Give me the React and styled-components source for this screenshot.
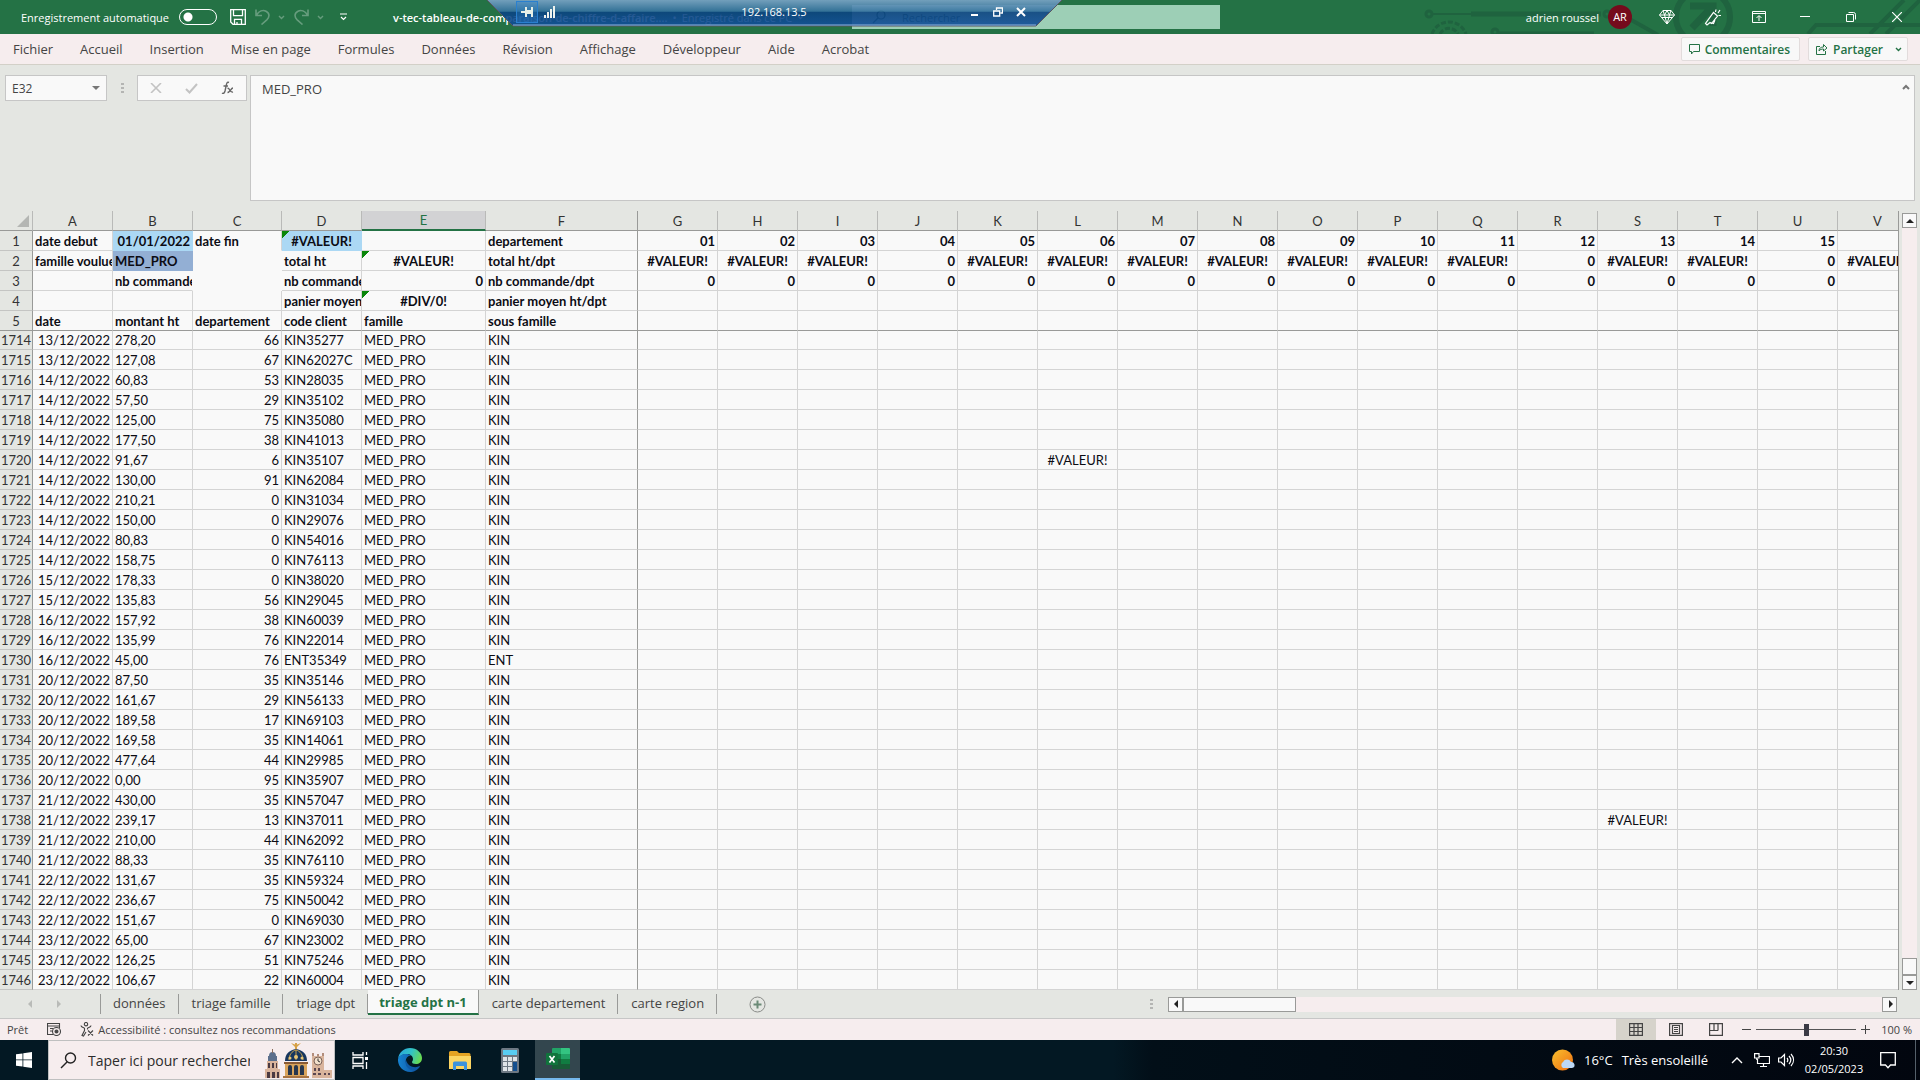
import React from "react";
import styled, { createGlobalStyle, css } from "styled-components";

const GlobalStyle = createGlobalStyle`
  * {
    box-sizing: border-box;
  }
  body {
    margin: 0;
    background: #e4e6e2;
    font-family: "Open Sans", "Noto Sans", sans-serif;
    font-size: 12px;
    color: #444;
  }
  button, input, textarea {
    font: inherit;
    color: inherit;
  }
  button {
    display: flex;
    align-items: center;
    justify-content: center;
    padding: 0;
    border: 0;
    background: none;
  }
  svg {
    display: block;
    flex: none;
  }
`;

const Page = styled.div`
  display: flex;
  flex-direction: column;
  min-height: 100vh;
`;

/* ---------- title bar ---------- */

const TitleBar = styled.header`
  position: relative;
  display: flex;
  align-items: center;
  height: 34px;
  padding-left: 21px;
  background: #247245;
  color: #fff;
  font-size: 11px;
`;

const Circuit = styled.svg`
  position: absolute;
  top: 0;
  right: 0;
`;

const AutoSave = styled.label`
  display: flex;
  align-items: center;
  justify-content: space-between;
  width: 196px;
  white-space: nowrap;
`;

const Toggle = styled.input`
  appearance: none;
  flex: none;
  width: 38px;
  height: 16px;
  margin: 0;
  border: 1px solid #fff;
  border-radius: 8px;
  background: radial-gradient(circle at 8px 7px, #fff 4px, transparent 5px);
`;

const QuickAccess = styled.div`
  display: flex;
  align-items: center;
  gap: 9px;
  margin-left: 13px;
`;

const QuickButton = styled.button`
  opacity: ${(props) => (props.$faded ? 0.3 : 1)};
  gap: 8px;
`;

const DocTitle = styled.div`
  display: flex;
  align-items: center;
  gap: 5px;
  width: 425px;
  margin-left: 40px;
  white-space: nowrap;

  b {
    font-weight: 600;
  }
`;

const SearchBox = styled.label`
  display: flex;
  align-items: center;
  gap: 16px;
  width: 368px;
  height: 24px;
  margin-left: 34px;
  padding-left: 20px;
  background: #9dcfb6;
  color: #14512f;

  input {
    flex: 1;
    min-width: 0;
    padding: 0;
    border: 0;
    outline: 0;
    background: none;
  }
  input::placeholder {
    color: #14512f;
  }
`;

const Account = styled.div`
  position: relative;
  display: flex;
  align-items: center;
  gap: 9px;
  margin-left: auto;
  white-space: nowrap;
`;

const Avatar = styled.span`
  width: 24px;
  height: 24px;
  border-radius: 50%;
  background: #750b1c;
  line-height: 24px;
  text-align: center;
`;

const WindowButtons = styled.div`
  position: relative;
  display: flex;
  margin-left: 12px;

  button {
    width: 46px;
    height: 34px;
  }
`;

const RemoteBar = styled.div`
  position: absolute;
  top: 0;
  left: 487px;
  width: 575px;
  height: 27px;
  display: flex;
  align-items: center;
  padding: 0 36px 4px 29px;
`;

const RemoteShape = styled.svg`
  position: absolute;
  top: 0;
  left: 0;
`;

const Signal = styled.svg`
  position: relative;
`;

const Pin = styled.button`
  position: relative;
  width: 22px;
  height: 22px;
  margin-right: 6px;
  border: 1px solid #2a80cf;
  background: rgba(42, 128, 207, 0.3);
`;

const RemoteAddress = styled.span`
  position: relative;
  flex: 1;
  padding-left: 22px;
  text-align: center;
`;

const RemoteButtons = styled.div`
  position: relative;
  display: flex;
  gap: 13px;
`;

/* ---------- ribbon ---------- */

const Ribbon = styled.nav`
  display: flex;
  align-items: center;
  height: 31px;
  padding: 0 12px 0 13px;
  border-bottom: 1px solid #d3d0c8;
  background: #f6edee;
`;

const Tabs = styled.div`
  display: flex;
  gap: 27px;
  flex: 1;
`;

const RibbonTab = styled.button`
  font-size: 13px;
  line-height: 20px;
  white-space: nowrap;
`;

const ShareButton = styled.button`
  gap: 5px;
  height: 24px;
  margin-left: 8px;
  padding: 0 9px 0 7px;
  border: 1px solid #e2dcdc;
  border-radius: 2px;
  background: #f8f8f8;
  color: #247245;
  font-weight: 600;

  svg:nth-of-type(2) {
    margin-left: 7px;
    margin-right: -4px;
  }
`;

/* ---------- formula bar ---------- */

const FormulaBar = styled.div`
  display: flex;
  align-items: flex-start;
  padding: 10px 5px;
`;

const NameBox = styled.div`
  display: flex;
  align-items: center;
  width: 102px;
  height: 26px;
  padding: 0 6px;
  border: 1px solid #c6c6c6;
  background: #f9f9f9;

  input {
    flex: 1;
    min-width: 0;
    padding: 0;
    border: 0;
    background: none;
  }
`;

const Grip = styled.span`
  width: 3px;
  height: 11px;
  background: repeating-linear-gradient(#b4b5b3 0 2px, transparent 2px 4px);
`;

const GripSlot = styled.div`
  display: flex;
  align-items: center;
  justify-content: center;
  width: 30px;
  height: 26px;
`;

const FormulaTools = styled.div`
  display: flex;
  align-items: center;
  justify-content: space-around;
  width: 110px;
  height: 26px;
  margin-right: 3px;
  border: 1px solid #c6c6c6;
  background: #f9f9f9;
`;

const FormulaField = styled.div`
  display: flex;
  align-items: flex-start;
  flex: 1;
  height: 126px;
  border: 1px solid #c6c6c6;
  background: #f9f9f9;

  textarea {
    flex: 1;
    height: 100%;
    padding: 4px 11px;
    border: 0;
    outline: 0;
    resize: none;
    background: none;
    font-size: 13px;
    line-height: 18px;
  }
  button {
    width: 16px;
    height: 22px;
  }
`;

/* ---------- sheet ---------- */

const SheetArea = styled.main`
  display: flex;
`;

const SheetView = styled.div`
  flex: 1;
  min-width: 0;
  overflow: hidden;
  border-right: 1px solid #999a98;
`;

const Sheet = styled.table`
  width: 1918px;
  table-layout: fixed;
  border-collapse: separate;
  border-spacing: 0;
  font-family: Lato, "Open Sans", sans-serif;
  font-size: 13px;
  line-height: 18px;
  color: #0c0c14;
`;

const ColHead = styled.th`
  height: 20px;
  padding: 0;
  border-right: 1px solid #b9bab8;
  border-bottom: 1px solid #999a98;
  background: #e4e6e2;
  color: #333;
  font-weight: 400;
  line-height: 16px;

  ${(props) =>
    props.$selected &&
    css`
      border-bottom: 2px solid #247245;
      background: #d2d2d4;
      color: #247245;
    `}
  ${(props) => props.$freeze && "border-right-color: #999a98;"}

  svg {
    margin-left: 17px;
  }
`;

const RowHead = styled.th`
  height: ${(props) => (props.$first ? 19 : 20)}px;
  padding: 0;
  border-right: 1px solid #999a98;
  border-bottom: 1px solid ${(props) => (props.$last ? "#999a98" : "#c4c5c3")};
  background: #e4e6e2;
  color: #333;
  font-weight: 400;
  text-align: center;
`;

const Cell = styled.td`
  padding: 0 2px;
  overflow: hidden;
  white-space: nowrap;
  border-right: 1px solid ${(props) => (props.$freeze ? "#999a98" : "#d4d4d4")};
  border-bottom: 1px solid ${(props) => (props.$last ? "#999a98" : "#d4d4d4")};
  background: ${(props) => props.$fill || "#f9f9f9"};
  font-weight: ${(props) => (props.$bold ? 700 : 400)};
  text-align: ${(props) => props.$align || "left"};

  ${(props) => props.$noBottom && "border-bottom-color: #f9f9f9;"}
  ${(props) => props.$noRight && "border-right-color: #f9f9f9;"}
  ${(props) => props.$fill && `border-color: ${props.$fill};`}
  ${(props) =>
    props.$error &&
    css`
      background-image: linear-gradient(135deg, #0a860a 5px, transparent 5px);
      background-repeat: no-repeat;
    `}
`;

const VScroll = styled.div`
  display: flex;
  flex-direction: column;
  width: 15px;
  margin: 2px 3px 0;
  background: #f6edee;
`;

const ScrollButton = styled.button`
  width: 15px;
  height: 15px;
  border: 1px solid #999a98;
  background: #f9f9f9;
`;

const VThumb = styled.div`
  height: 17px;
  margin-top: auto;
  border: 1px solid #999a98;
  background: #f9f9f9;
`;

/* ---------- sheet tabs ---------- */

const SheetTabs = styled.div`
  display: flex;
  align-items: center;
  height: 29px;
  padding-right: 23px;
  border-bottom: 1px solid #c6c6c6;
  background: #e4e6e2;
`;

const TabArrows = styled.div`
  display: flex;
  gap: 22px;
  width: 100px;
  padding-left: 27px;
`;

const SheetTab = styled.button`
  height: 20px;
  padding: 0 12px 2px;
  border-left: 1px solid ${(props) => (props.$first ? "#999a98" : "transparent")};
  border-right: 1px solid #999a98;
  font-size: 13px;
  white-space: nowrap;

  ${(props) =>
    props.$active &&
    css`
      align-self: flex-start;
      height: 25px;
      padding: 0 11px;
      border-left: 0;
      border-bottom: 2px solid #247245;
      background: #f9f9f9;
      color: #247245;
      font-weight: 700;
    `}
`;

const AddSheet = styled.button`
  margin-left: 32px;
`;

const TabGrip = styled.div`
  display: flex;
  margin-left: auto;
  padding-right: 15px;
`;

const HScroll = styled.div`
  display: flex;
  width: 729px;
  background: #f6edee;
`;

const HThumb = styled.div`
  width: 113px;
  height: 15px;
  margin-right: auto;
  border: 1px solid #999a98;
  background: #f9f9f9;
`;

/* ---------- status bar ---------- */

const StatusBar = styled.footer`
  display: flex;
  align-items: center;
  height: 21px;
  padding: 0 8px 0 7px;
  background: #f6edee;
  font-size: 11px;
  white-space: nowrap;
`;

const StatusItem = styled.span`
  display: flex;
  align-items: center;
  gap: 4px;
  margin-right: 19px;
`;

const Views = styled.div`
  display: flex;
  margin-left: auto;
`;

const ViewButton = styled.button`
  width: 40px;
  height: 21px;
  background: ${(props) => (props.$active ? "#d6d3cb" : "none")};
`;

const Zoom = styled.div`
  display: flex;
  align-items: center;
  gap: 5px;
  margin-left: 6px;
`;

const ZoomSlider = styled.input`
  appearance: none;
  width: 100px;
  height: 12px;
  margin: 0;
  background: linear-gradient(#555, #555) center / 100% 1px no-repeat;

  &::-webkit-slider-thumb {
    appearance: none;
    width: 5px;
    height: 12px;
    background: #3a3a44;
  }
`;

const ZoomValue = styled.span`
  width: 37px;
  text-align: right;
`;

/* ---------- taskbar ---------- */

const Taskbar = styled.div`
  display: flex;
  height: 40px;
  background: linear-gradient(90deg, #031823 0%, #031823 58%, #020f18 60%, #02060f 100%);
  color: #fff;
`;

const TaskButton = styled.button`
  width: ${(props) => props.$width || 50}px;
  height: 40px;

  ${(props) =>
    props.$active &&
    css`
      width: 45px;
      border-bottom: 2px solid #76b9ed;
      background: #33464e;
    `}
`;

const TaskSearch = styled.label`
  display: flex;
  align-items: center;
  width: 287px;
  border: 1px solid #bfc0c0;
  padding-left: 11px;
  background: #f6edee;
  color: #222;

  input {
    flex: 1;
    min-width: 0;
    margin-left: 11px;
    padding: 0;
    border: 0;
    background: none;
    font-size: 14px;
  }
  input::placeholder {
    color: #2b2b2b;
  }
`;

const Tray = styled.div`
  display: flex;
  align-items: center;
  margin-left: auto;
  padding-right: 4px;
  white-space: nowrap;
`;

const Weather = styled.button`
  gap: 9px;
  margin-right: 16px;
  font-size: 13px;
`;

const Clock = styled.time`
  width: 72px;
  margin-right: 10px;
  font-size: 11px;
  line-height: 18px;
  text-align: center;
`;

const TrayEdge = styled.span`
  width: 1px;
  height: 40px;
  margin-left: 19px;
  background: #55606a;
`;

/* ---------- icons ---------- */

const Line = ({ w = 16, h = 16, children, sw = 1, ...rest }) => (
  <svg width={w} height={h} viewBox={`0 0 ${w} ${h}`} fill="none" stroke="currentColor" strokeWidth={sw} aria-hidden="true" {...rest}>
    {children}
  </svg>
);

const Chevron = () => (
  <Line w={7} h={5} sw={1.4}><path d="M1 1l2.5 2.5L6 1" /></Line>
);

const Triangle = ({ dir, color = "#222" }) => {
  const d = {
    up: "M0 5h8L4 1z",
    down: "M0 1h8L4 5z",
    left: "M5 0v8L1 4z",
    right: "M2 0v8l4-4z",
  }[dir];
  const tall = dir === "left" || dir === "right";
  return (
    <svg width={tall ? 6 : 8} height={tall ? 8 : 6} fill={color} aria-hidden="true">
      <path d={d} />
    </svg>
  );
};

const CircuitArt = () => (
  <Circuit width="520" height="34" viewBox="0 0 520 34" fill="none" stroke="#1f633f" strokeWidth="3" aria-hidden="true">
    <circle cx="29" cy="14" r="3" />
    <path d="M33 14h38" strokeWidth="2" />
    <path d="M71 14h130" strokeWidth="5" />
    <circle cx="207" cy="14" r="3" />
    <path d="M32 34a18 18 0 0 1 34 0M40 34a10 10 0 0 1 18 0" strokeDasharray="5 2" />
    <circle cx="95" cy="32" r="3" />
    <path d="M99 33h95" />
    <path d="M226 17l32 18" strokeWidth="4" />
    <circle cx="303" cy="17" r="27" strokeWidth="6" />
    <path d="M290 6h23v20M311 8l-19 20" strokeWidth="7" />
    <path d="M408 34l8-9h104M470 34l34-34M486 34l34-34" strokeWidth="4" />
  </Circuit>
);

const SaveIcon = () => (
  <Line w={16} h={16} sw={1.3}>
    <path d="M.7.7h14.6v14.6H3L.7 13zM3.5.7v6h9v-6M4.5 15.3v-5h7v5M7 15v-2" />
  </Line>
);

const UndoIcon = ({ flip }) => (
  <Line w={15} h={16} sw={1.6} transform={flip ? "scale(-1 1)" : undefined}>
    <path d="M1 .5v6h6M1.3 6.2C4 2 8 .8 11 2.2c4 2 3.6 6 .8 8.6L6.5 15.5" />
  </Line>
);

const DiamondIcon = () => (
  <Line>
    <path d="M4 1.5h8l3.5 4.5L8 15 .5 6zM.5 6h15M4 1.5L5.5 6 8 15l2.5-9L12 1.5M8 1.5L5.5 6M8 1.5L10.5 6M2.5 8.5h11" />
  </Line>
);

const PenIcon = () => (
  <Line w={18} h={17} sw={1.2}>
    <path d="M9.500 3.500l4 3.500-6 7.500-1.500-1-3 2.500-1.500-1.500zM6 13.500l3.500 1 1.500-3.500M11.500 3l.5-2.500M14 4l2-3M14.500 6.500h2.500" />
  </Line>
);

const DomeArt = () => (
  <svg width="70" height="36" viewBox="0 0 70 36" aria-hidden="true">
    <g fill="#d9b49c">
      <path d="M1 36V27h15v9zM3 27v-8h11v8z" />
      <path d="M48 36V14h12v22zM60 36v-8h8v8z" />
    </g>
    <path d="M4 19v-5h9v5zM5 14a3.5 4 0 0 1 7 0z" fill="#5b6f8c" />
    <path d="M8.5 7v4" stroke="#8b6d5c" />
    <path d="M4 21h2v5H4zM8 21h2v5H8zM12 21h1v5h-1zM3 30h3v6H3zM8 30h3v6H8zM13 30h2v6h-2z" fill="#4a3a42" />
    <path d="M21 36V20h22v16z" fill="#d9a45c" />
    <path d="M21 19C21 11 26 8 32 7c6 1 11 4 11 12z" fill="#17375f" />
    <path d="M25 18c0-5 3-9 7-10M39 18c0-5-3-9-7-10M32 8v10" stroke="#c8a04b" fill="none" />
    <circle cx="32" cy="15" r="2" fill="#e9c674" />
    <circle cx="26" cy="16" r="1.5" fill="#e9c674" />
    <circle cx="38" cy="16" r="1.5" fill="#e9c674" />
    <path d="M20 20h24v2H20z" fill="#8a5b35" />
    <path d="M31 7V1h2v6zM27 1l5 2 5-2-4 4h-2z" fill="#d6a045" />
    <path d="M24 25a2 2 0 0 1 4 0v8h-4zM30 25a2 2 0 0 1 4 0v8h-4zM36 25a2 2 0 0 1 4 0v8h-4z" fill="#27364d" />
    <path d="M19 34h26v2H19z" fill="#a87442" />
    <path d="M48 14v-3h2v3zM53 14v-2h2v2zM58 14v-3h2v3z" fill="#b28d7c" />
    <circle cx="54" cy="19" r="4" fill="#f1dfcb" stroke="#7b6258" />
    <path d="M54 16.5V19l2 1" stroke="#333" fill="none" />
    <path d="M50 26h2v3h-2zM54 26h2v3h-2zM49 31h3v2h-3zM54 31h3v2h-3zM60 31h2v2h-2zM64 31h2v2h-2z" fill="#5a4650" />
  </svg>
);

const EdgeIcon = () => (
  <svg width="24" height="24" viewBox="0 0 24 24" aria-hidden="true">
    <defs>
      <linearGradient id="edgeTop" x1="0" x2="1" y1=".3" y2=".6">
        <stop offset="0" stopColor="#2aa6dd" />
        <stop offset=".5" stopColor="#32c3c6" />
        <stop offset="1" stopColor="#6bdc4c" />
      </linearGradient>
      <linearGradient id="edgeLow" x1="0" x2="1">
        <stop offset="0" stopColor="#1683d2" />
        <stop offset="1" stopColor="#0d4c98" />
      </linearGradient>
    </defs>
    <path d="M0 11C1 4 6 0 12 0c7 0 12 5 12 10 0 4-3 6-6 6-3 0-4-1-4-2s1-1 1-3c0-3-3-5-6-5-4 0-8 2-9 5z" fill="url(#edgeTop)" />
    <path d="M0 11c1-3 4-5 8-5 2 0 4 .6 5 1.5C9 8 7 11 8 15c1 4 5 6 9 5 2 0 4-1 5-2-2 4-6 6-10 6C5 24-.5 18 0 11z" fill="url(#edgeLow)" />
    <path d="M8 12c-1.500 4 1 9 6 10 4 .5 7-2 8-4-5 2.500-12 1-14-6z" fill="#0e5aa7" />
  </svg>
);

const ExplorerIcon = () => (
  <svg width="22" height="19" viewBox="0 0 22 19" aria-hidden="true">
    <path d="M0 1.5Q0 0 1.5 0H8l2 2h10q1.5 0 1.5 1.5V18H0z" fill="#e5a323" />
    <path d="M0 5h22v13H0z" fill="#fcd563" />
    <path d="M4 19v-7q0-1.5 1.5-1.5h11Q18 10.5 18 12v7h-3v-4H7v4z" fill="#3c92dc" />
  </svg>
);

const CalcIcon = () => (
  <svg width="18" height="25" viewBox="0 0 18 25" aria-hidden="true">
    <rect width="18" height="25" rx="1.5" fill="#6d7883" />
    <path d="M2 2h14v5H2z" fill="#58cdf3" />
    <path d="M2 9h4v4H2zM7 9h4v4H7zM12 9h4v4h-4zM2 14h4v4H2zM7 14h4v4H7zM2 19h4v4H2zM7 19h4v4H7z" fill="#dfe4e8" />
    <path d="M12 14h4v9h-4z" fill="#134f8f" />
  </svg>
);

const ExcelIcon = () => (
  <svg width="24" height="22" viewBox="0 0 24 22" aria-hidden="true">
    <path d="M6 1q0-1 1-1h8v11H6z" fill="#21a366" />
    <path d="M15 0h8q1 0 1 1v5h-9z" fill="#33c481" />
    <path d="M15 6h9v5h-9z" fill="#21a366" />
    <path d="M6 6h9v5H6z" fill="#107c41" />
    <path d="M6 11h18v9q0 1-1 1H7q-1 0-1-1z" fill="#185c37" />
    <path d="M15 11h9v5h-9z" fill="#107c41" />
    <rect y="5" width="12" height="12" rx="1" fill="#10743c" />
    <path d="M3.5 8l5 6.5M8.5 8l-5 6.5" stroke="#fff" strokeWidth="1.7" />
  </svg>
);

const WeatherIcon = () => (
  <svg width="23" height="25" viewBox="0 0 23 25" aria-hidden="true">
    <defs>
      <linearGradient id="sun" x1="0" x2="1" y1="0" y2="1">
        <stop offset="0" stopColor="#f9c02e" />
        <stop offset="1" stopColor="#ee6d12" />
      </linearGradient>
    </defs>
    <circle cx="10.5" cy="12" r="10.5" fill="url(#sun)" />
    <path d="M11 20a3.500 3.500 0 0 1 0-6 4.500 4.500 0 0 1 8 0 3 3 0 0 1 1 6z" fill="#bcd8f6" />
  </svg>
);

/* ---------- data ---------- */

const widths = [80, 80, 89, 80, 124, 152, ...Array(16).fill(80)];
const letters = "ABCDEFGHIJKLMNOPQRSTUV".split("");
const ERR = "#VALEUR!";

const totals = [ERR, ERR, ERR, "0", ERR, ERR, ERR, ERR, ERR, ERR, ERR, "0", ERR, ERR, "0", ERR];

const frozenRows = [
  ["date debut", "01/01/2022", "date fin", ERR, "", "departement",
    ...Array.from({ length: 15 }, (_, i) => String(i + 1).padStart(2, "0")), ""],
  ["famille voulue", "MED_PRO", "", "total ht", ERR, "total ht/dpt", ...totals],
  ["", "nb commande", "", "nb commande", "0", "nb commande/dpt", ...Array(15).fill("0"), ""],
  ["", "", "", "panier moyen", "#DIV/0!", "panier moyen ht/dpt", ...Array(16).fill("")],
  ["date", "montant ht", "departement", "code client", "famille", "sous famille", ...Array(16).fill("")],
];

const orders = [
  ["13/12/2022", "278,20", "66", "KIN35277"],
  ["13/12/2022", "127,08", "67", "KIN62027C"],
  ["14/12/2022", "60,83", "53", "KIN28035"],
  ["14/12/2022", "57,50", "29", "KIN35102"],
  ["14/12/2022", "125,00", "75", "KIN35080"],
  ["14/12/2022", "177,50", "38", "KIN41013"],
  ["14/12/2022", "91,67", "6", "KIN35107"],
  ["14/12/2022", "130,00", "91", "KIN62084"],
  ["14/12/2022", "210,21", "0", "KIN31034"],
  ["14/12/2022", "150,00", "0", "KIN29076"],
  ["14/12/2022", "80,83", "0", "KIN54016"],
  ["14/12/2022", "158,75", "0", "KIN76113"],
  ["15/12/2022", "178,33", "0", "KIN38020"],
  ["15/12/2022", "135,83", "56", "KIN29045"],
  ["16/12/2022", "157,92", "38", "KIN60039"],
  ["16/12/2022", "135,99", "76", "KIN22014"],
  ["16/12/2022", "45,00", "76", "ENT35349"],
  ["20/12/2022", "87,50", "35", "KIN35146"],
  ["20/12/2022", "161,67", "29", "KIN56133"],
  ["20/12/2022", "189,58", "17", "KIN69103"],
  ["20/12/2022", "169,58", "35", "KIN14061"],
  ["20/12/2022", "477,64", "44", "KIN29985"],
  ["20/12/2022", "0,00", "95", "KIN35907"],
  ["21/12/2022", "430,00", "35", "KIN57047"],
  ["21/12/2022", "239,17", "13", "KIN37011"],
  ["21/12/2022", "210,00", "44", "KIN62092"],
  ["21/12/2022", "88,33", "35", "KIN76110"],
  ["22/12/2022", "131,67", "35", "KIN59324"],
  ["22/12/2022", "236,67", "75", "KIN50042"],
  ["22/12/2022", "151,67", "0", "KIN69030"],
  ["23/12/2022", "65,00", "67", "KIN23002"],
  ["23/12/2022", "126,25", "51", "KIN75246"],
  ["23/12/2022", "106,67", "22", "KIN60004"],
];

const strayErrors = { "1720L": ERR, "1738S": ERR };
const fills = { B1: "#abd8f4", D1: "#abd8f4", B2: "#93afd4" };
const flagged = ["D1", "E2", "E4"];

const alignOf = (text) => {
  if (text.startsWith("#")) return "center";
  if (/^\d/.test(text)) return "right";
  return "left";
};

const FrozenRow = ({ cells, number }) => (
  <tr>
    <RowHead scope="row" $last={number === 5}>{number}</RowHead>
    {cells.map((text, i) => {
      const id = letters[i] + number;
      return (
        <Cell
          key={id}
          $bold
          $align={alignOf(text)}
          $fill={fills[id]}
          $error={flagged.includes(id)}
          $freeze={letters[i] === "F"}
          $last={number === 5}
          $noBottom={["C1", "C2", "C3"].includes(id)}
          $noRight={["B3", "C2", "C3"].includes(id)}
        >
          {text}
        </Cell>
      );
    })}
  </tr>
);

const OrderRow = ({ order, number }) => (
  <tr>
    <RowHead scope="row" $first={number === 1714}>{number}</RowHead>
    <Cell $align="right">{order[0]}</Cell>
    <Cell>{order[1]}</Cell>
    <Cell $align="right">{order[2]}</Cell>
    <Cell>{order[3]}</Cell>
    <Cell>MED_PRO</Cell>
    <Cell $freeze>{order[3].slice(0, 3)}</Cell>
    {letters.slice(6).map((letter) => (
      <Cell key={letter} $align="center">{strayErrors[number + letter]}</Cell>
    ))}
  </tr>
);

const ribbonTabs = ["Fichier", "Accueil", "Insertion", "Mise en page", "Formules", "Données", "Révision", "Affichage", "Développeur", "Aide", "Acrobat"];
const sheetTabs = ["données", "triage famille", "triage dpt", "triage dpt n-1", "carte departement", "carte region"];

const App = () => {
  return (
    <Page>
      <GlobalStyle />
      <TitleBar>
        <CircuitArt />
        <AutoSave>
          Enregistrement automatique
          <Toggle type="checkbox" role="switch" />
        </AutoSave>
        <QuickAccess>
          <QuickButton aria-label="Enregistrer"><SaveIcon /></QuickButton>
          <QuickButton $faded aria-label="Annuler"><UndoIcon /><Chevron /></QuickButton>
          <QuickButton $faded aria-label="Rétablir"><UndoIcon flip /><Chevron /></QuickButton>
          <QuickButton aria-label="Personnaliser">
            <Line w={20} h={8} sw={1.2}><path d="M7 1h7M8 4l2.5 2.5L13 4" /></Line>
          </QuickButton>
        </QuickAccess>
        <DocTitle>
          <b>v-tec-tableau-de-comparaison-de-chiffre-d-affaire....</b>
          <span>•</span>
          <span>Enregistré dans ce PC</span>
          <Chevron />
        </DocTitle>
        <SearchBox>
          <Line w={14} h={14} sw={1.2}><path d="M1 13l5-5" /><circle cx="9" cy="5" r="4" /></Line>
          <input type="search" placeholder="Rechercher" aria-label="Rechercher" />
        </SearchBox>
        <Account>
          adrien roussel
          <Avatar>AR</Avatar>
        </Account>
        <WindowButtons>
          <button aria-label="Premium"><DiamondIcon /></button>
          <button aria-label="Nouveautés"><PenIcon /></button>
          <button aria-label="Options du ruban">
            <Line w={14} h={12}><path d="M.5.5h13v11H.5zM.5 2.5h13M7 10V5M4.5 7L7 4.5 9.5 7" /></Line>
          </button>
          <button aria-label="Réduire"><Line w={10} h={10}><path d="M0 4.5h10" /></Line></button>
          <button aria-label="Restaurer">
            <Line w={10} h={10}><path d="M.5 2.5h7v7h-7zM2.5.5h5a2 2 0 0 1 2 2v5" /></Line>
          </button>
          <button aria-label="Fermer"><Line w={10} h={10} sw={1.2}><path d="M0 0l10 10M10 0L0 10" /></Line></button>
        </WindowButtons>
        <RemoteBar>
          <RemoteShape width="575" height="27" viewBox="0 0 575 27" aria-hidden="true">
            <defs>
              <linearGradient id="remote" x1="0" x2="0" y1="0" y2="1">
                <stop offset="0" stopColor="#7ba4c8" />
                <stop offset=".44" stopColor="#34719f" />
                <stop offset=".45" stopColor="#0b4380" />
                <stop offset="1" stopColor="#12509a" />
              </linearGradient>
            </defs>
            <path d="M0 0h575l-26 26H26z" fill="url(#remote)" fillOpacity=".9" />
            <path d="M0 0l26 26h523l26-26" fill="none" stroke="#5b5560" />
            <path d="M26 25h523" stroke="#8eb4dc" />
          </RemoteShape>
          <Pin aria-label="Épingler">
            <svg width="13" height="12" fill="#e8f0e8" aria-hidden="true">
              <path d="M0 5h4v2H0zM4 1h2v10H4zM6 4h5v4H6zM10 1h2v10h-2z" />
            </svg>
          </Pin>
          <Signal width="12" height="12" fill="#eef2ee" aria-hidden="true">
            <path d="M0 9h2v3H0zM3 6h2v6H3zM6 3h2v9H6zM9 0h2v12H9z" />
          </Signal>
          <RemoteAddress>192.168.13.5</RemoteAddress>
          <RemoteButtons>
            <button aria-label="Réduire la session"><Line w={10} h={10} sw={2}><path d="M1 8h7" /></Line></button>
            <button aria-label="Restaurer la session">
              <Line w={10} h={10} sw={1.3}><path d="M3.5 3V1h6v5h-2M.7 4h6v5h-6z" /></Line>
            </button>
            <button aria-label="Fermer la session"><Line w={10} h={10} sw={2}><path d="M1 1l8 8M9 1L1 9" /></Line></button>
          </RemoteButtons>
        </RemoteBar>
      </TitleBar>

      <Ribbon>
        <Tabs>
          {ribbonTabs.map((tab) => (
            <RibbonTab key={tab}>{tab}</RibbonTab>
          ))}
        </Tabs>
        <ShareButton>
          <Line w={11} h={11}><path d="M.5.5h10v7h-6l-2 2.5V7.5h-2z" /></Line>
          Commentaires
        </ShareButton>
        <ShareButton>
          <Line w={12} h={12}><path d="M4 3.5H.5v8h9V8M3 8c0-3 2-4 4.5-4V1.5L11 5 7.5 8V6C5.500 6 4 6.500 3 8z" /></Line>
          Partager
          <Chevron />
        </ShareButton>
      </Ribbon>

      <FormulaBar>
        <NameBox>
          <input aria-label="Zone Nom" defaultValue="E32" />
          <button aria-label="Liste des noms"><Triangle dir="down" color="#777" /></button>
        </NameBox>
        <GripSlot><Grip /></GripSlot>
        <FormulaTools>
          <button aria-label="Annuler la saisie">
            <Line w={12} h={10} sw={1.6} color="#c3c3c3"><path d="M1 0l10 10M11 0L1 10" /></Line>
          </button>
          <button aria-label="Valider">
            <Line w={13} h={11} sw={2} color="#c3c3c3"><path d="M1 6l3.5 3.5L12 1" /></Line>
          </button>
          <button aria-label="Insérer une fonction">
            <Line w={13} h={14} sw={1.4} color="#666"><path d="M8 1.5c-2-1-2.5 1-3 4L4 10c-.5 2-1.5 3-3 2M2.5 5H7M6.5 7.5C8.5 6 8.5 12 12 11M12 7c-2 0-3 4.5-5.5 4.5" /></Line>
          </button>
        </FormulaTools>
        <FormulaField>
          <textarea aria-label="Barre de formule" defaultValue="MED_PRO" />
          <button aria-label="Réduire la barre de formule">
            <Line w={8} h={6} sw={2} color="#777"><path d="M1 5l3-3 3 3" /></Line>
          </button>
        </FormulaField>
      </FormulaBar>

      <SheetArea>
        <SheetView>
          <Sheet>
            <colgroup>
              <col width="33" />
              {widths.map((w, i) => (
                <col key={letters[i]} width={w} />
              ))}
            </colgroup>
            <thead>
              <tr>
                <ColHead aria-label="Tout sélectionner">
                  <svg width="12" height="12" fill="#b4b6b3" aria-hidden="true"><path d="M12 0v12H0z" /></svg>
                </ColHead>
                {letters.map((letter) => (
                  <ColHead key={letter} scope="col" $selected={letter === "E"} $freeze={letter === "F"}>
                    {letter}
                  </ColHead>
                ))}
              </tr>
            </thead>
            <tbody>
              {frozenRows.map((cells, i) => (
                <FrozenRow key={i} cells={cells} number={i + 1} />
              ))}
              {orders.map((order, i) => (
                <OrderRow key={i} order={order} number={1714 + i} />
              ))}
            </tbody>
          </Sheet>
        </SheetView>
        <VScroll>
          <ScrollButton aria-label="Défiler vers le haut"><Triangle dir="up" /></ScrollButton>
          <VThumb />
          <ScrollButton aria-label="Défiler vers le bas"><Triangle dir="down" /></ScrollButton>
        </VScroll>
      </SheetArea>

      <SheetTabs>
        <TabArrows>
          <Triangle dir="left" color="#b9bbb8" />
          <Triangle dir="right" color="#b9bbb8" />
        </TabArrows>
        {sheetTabs.map((tab, i) => (
          <SheetTab key={tab} $first={i === 0} $active={i === 3}>{tab}</SheetTab>
        ))}
        <AddSheet aria-label="Nouvelle feuille">
          <Line w={17} h={17} color="#8a8c89">
            <circle cx="8.5" cy="8.5" r="7.5" />
            <path d="M8.5 4.5v8M4.5 8.5h8" stroke="#6b8a77" strokeWidth="2" />
          </Line>
        </AddSheet>
        <TabGrip><Grip /></TabGrip>
        <HScroll>
          <ScrollButton aria-label="Défiler vers la gauche"><Triangle dir="left" /></ScrollButton>
          <HThumb />
          <ScrollButton aria-label="Défiler vers la droite"><Triangle dir="right" /></ScrollButton>
        </HScroll>
      </SheetTabs>

      <StatusBar>
        <StatusItem>Prêt</StatusItem>
        <StatusItem>
          <Line w={14} h={13} sw={1.1}>
            <path d="M6 11.5H.5V.5h12V5M.5 3h12M3 5.5h3M3 8h2" />
            <circle cx="9.5" cy="8.5" r="4" /><circle cx="9.5" cy="8.5" r="1.5" fill="currentColor" />
          </Line>
        </StatusItem>
        <StatusItem>
          <Line w={14} h={15} sw={1.1}>
            <circle cx="6" cy="2.2" r="1.7" />
            <path d="M1 3.5c0 2 3 2 3.5 3v2L2 13.5l1.5.5L6 10M11 3.5c0 2-3 2-3.5 3v1M8 8.5l5 5M13 8.5l-5 5" />
          </Line>
          Accessibilité : consultez nos recommandations
        </StatusItem>
        <Views>
          <ViewButton $active aria-label="Normal">
            <Line w={14} h={13} sw={1.2}><path d="M.6.6h12.8v11.8H.6zM5 .6v12M9 .6v12M.6 4.5h13M.6 8.5h13" /></Line>
          </ViewButton>
          <ViewButton aria-label="Mise en page">
            <Line w={14} h={13} sw={1.2}><path d="M.6.6h12.8v11.8H.6zM3.5 2.5h7v8h-7zM5 4.5h4M5 6.5h4M5 8.5h4" /></Line>
          </ViewButton>
          <ViewButton aria-label="Aperçu des sauts de page">
            <Line w={14} h={13} sw={1.2}><path d="M.6.6h12.8v11.8H.6zM5 .6v7M9 .6v7M.6 7.5h8.5" /></Line>
          </ViewButton>
        </Views>
        <Zoom>
          <button aria-label="Zoom arrière"><Line w={9} h={9}><path d="M0 4.5h9" /></Line></button>
          <ZoomSlider type="range" min="10" max="190" defaultValue="100" aria-label="Zoom" />
          <button aria-label="Zoom avant"><Line w={9} h={9}><path d="M0 4.5h9M4.5 0v9" /></Line></button>
          <ZoomValue>100 %</ZoomValue>
        </Zoom>
      </StatusBar>

      <Taskbar>
        <TaskButton $width={48} aria-label="Démarrer">
          <svg width="16" height="16" fill="#fff" aria-hidden="true">
            <path d="M0 2.3L6.5 1.4v6.1H0zM7.3 1.3L16 0v7.5H7.3zM0 8.3h6.5v6.3L0 13.7zM7.3 8.3H16V16l-8.7-1.3z" />
          </svg>
        </TaskButton>
        <TaskSearch>
          <Line w={17} h={17} sw={1.4}><path d="M1 16l6-6" /><circle cx="10.5" cy="6" r="5" /></Line>
          <input type="search" placeholder="Taper ici pour rechercher" aria-label="Taper ici pour rechercher" />
          <DomeArt />
        </TaskSearch>
        <TaskButton aria-label="Affichage des tâches">
          <Line w={17} h={17} sw={1.3}>
            <path d="M1 0v3h10V0M1 17v-3h10v3M1 5.5h10v6H1zM14.5 0v3M14.5 10v7" />
            <path d="M13 5h3v3h-3z" fill="currentColor" stroke="none" />
          </Line>
        </TaskButton>
        <TaskButton aria-label="Edge"><EdgeIcon /></TaskButton>
        <TaskButton aria-label="Explorateur de fichiers"><ExplorerIcon /></TaskButton>
        <TaskButton aria-label="Calculatrice"><CalcIcon /></TaskButton>
        <TaskButton $active aria-label="Excel"><ExcelIcon /></TaskButton>
        <Tray>
          <Weather>
            <WeatherIcon />
            <span>16°C</span>
            <span>Très ensoleillé</span>
          </Weather>
          <TaskButton $width={26} aria-label="Icônes cachées">
            <Line w={12} h={8} sw={1.4}><path d="M1 7l5-5 5 5" /></Line>
          </TaskButton>
          <TaskButton $width={24} aria-label="Réseau">
            <Line w={16} h={14} sw={1.2}><path d="M5 3.5h10.5v7H3.5V6M6 13.5h7M9.5 10.5v3M.6.6H5V5H.6zM2.8 5v2" /></Line>
          </TaskButton>
          <TaskButton $width={24} aria-label="Volume">
            <Line w={17} h={14} sw={1.2}><path d="M.6 5v4H3l3.5 3.5v-11L3 5zM9 5c1 1.2 1 2.8 0 4M11 3c2.2 2.4 2.2 5.6 0 8M13 1c3.3 3.6 3.3 8.4 0 12" /></Line>
          </TaskButton>
          <Clock>
            20:30
            <br />
            02/05/2023
          </Clock>
          <button aria-label="Notifications">
            <Line w={16} h={17} sw={1.3}><path d="M.7.7h14.6v12.3H10.5L8 15.7 5.5 13H.7z" /></Line>
          </button>
          <TrayEdge />
        </Tray>
      </Taskbar>
    </Page>
  );
};

export default App;
